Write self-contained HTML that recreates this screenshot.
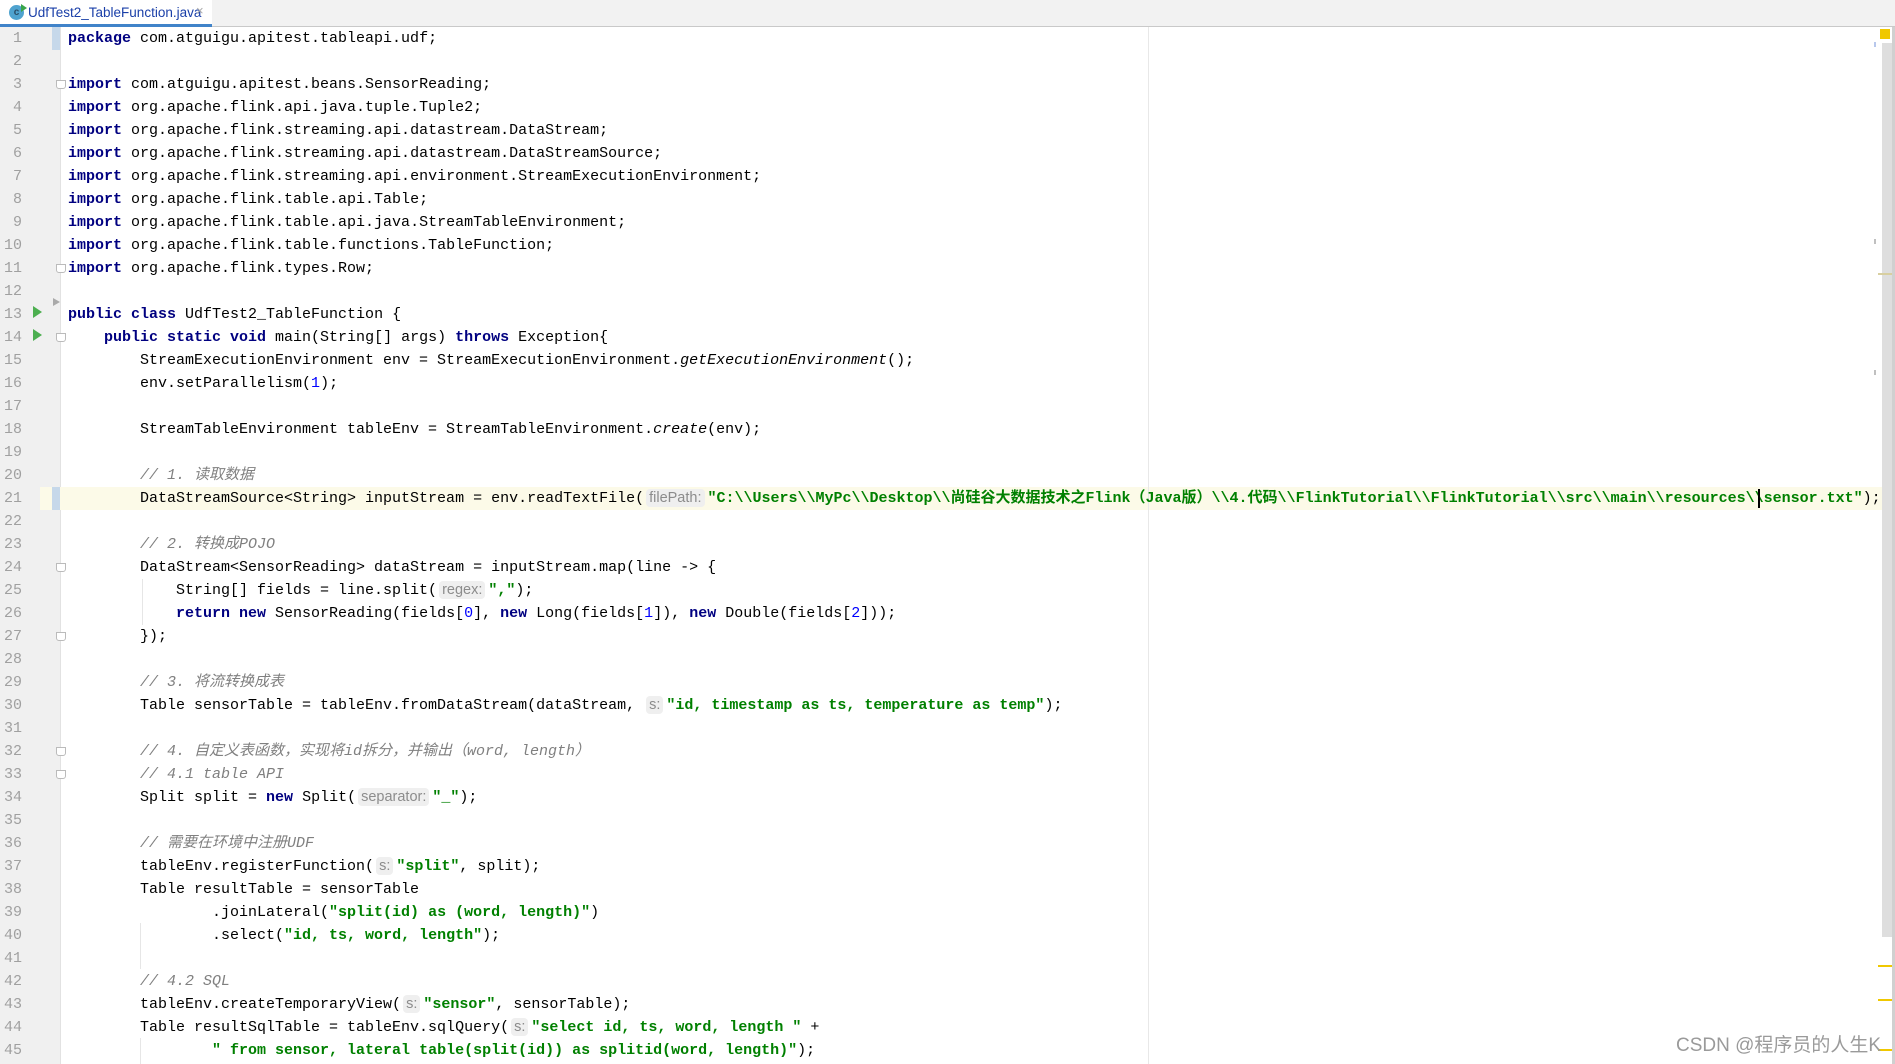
<!DOCTYPE html>
<html><head><meta charset="utf-8"><style>
html,body{margin:0;padding:0;width:1895px;height:1064px;overflow:hidden;background:#fff;}
#tabbar{position:absolute;left:0;top:0;width:1895px;height:26px;background:#f2f2f2;border-bottom:1px solid #c9c9c9;}
#tab{position:absolute;left:0;top:0;width:212px;height:24px;border-bottom:3px solid #4083c9;background:#fff;font:13.5px "Liberation Sans",sans-serif;color:#1a3fa8;}
#tab .ic{position:absolute;left:9px;top:5px;width:15px;height:15px;border-radius:50%;background:#4fa3cf;color:#2a4d66;font:bold 10px "Liberation Sans",sans-serif;text-align:center;line-height:15px;}
#tab .ic:after{content:"";position:absolute;right:-3px;top:-1px;border-left:6px solid #3aa54a;border-top:4px solid transparent;border-bottom:4px solid transparent;}
#tab .t{position:absolute;left:28px;top:5px;}
#tab .x{position:absolute;left:196px;top:3px;color:#aaa;font-size:13px;}
#gutter{position:absolute;left:0;top:27px;width:60px;height:1037px;background:#f0f0f0;border-right:1px solid #e2e2e2;}
#nums{position:absolute;left:0;top:27px;width:22px;text-align:right;font:15px/23px "Liberation Mono",monospace;color:#a0a0a0;}
#code{position:absolute;left:68px;top:27px;font:15px/23px "Liberation Mono","Noto Sans CJK SC",monospace;color:#000;white-space:pre;}
.k{color:#000080;font-weight:bold}
.s{color:#008000;font-weight:bold}
.n{color:#0000ff}
.c{color:#808080;font-style:italic}
.i{font-style:italic}
.h{font:14.5px "Liberation Sans","Noto Sans CJK SC",sans-serif;color:#8c8c8c;background:#efefef;border-radius:4px;padding:1px 3px;margin:0 3px 0 2px;}
#cur{position:absolute;left:40px;top:487px;width:1842px;height:23px;background:#fcfae8;}
#curmark{position:absolute;left:52px;top:487px;width:8px;height:23px;background:#c6d8ea;}
#l1mark{position:absolute;left:52px;top:27px;width:8px;height:23px;background:#c6d8ea;}
#margin{position:absolute;left:1148px;top:27px;width:1px;height:1037px;background:#e8e8e8;}
.guide{position:absolute;width:1px;background:#e6e6e6;}
.run{position:absolute;left:33px;width:0;height:0;border-left:9px solid #4caf50;border-top:6px solid transparent;border-bottom:6px solid transparent;}
.fold{position:absolute;left:56px;width:8px;height:7px;border:1px solid #bbb;background:#fff;border-radius:0 0 3px 3px;}
#sb{position:absolute;left:1882px;top:43px;width:10px;height:894px;background:#dedede;}
#sbedge{position:absolute;left:1892px;top:27px;width:3px;height:1037px;background:#d0d0d0;}
#caret{position:absolute;left:1758px;top:489px;width:2px;height:19px;background:#000;}
#wm{position:absolute;left:1676px;top:1030px;font:19px "Liberation Sans","Noto Sans CJK SC",sans-serif;color:#9a9a9a;}
</style></head><body>
<div id="tabbar"><div id="tab"><div class="ic">c</div><span class="t">UdfTest2_TableFunction.java</span><span class="x">×</span></div></div>
<div id="gutter"></div>
<div id="cur"></div><div id="curmark"></div><div id="l1mark"></div>
<div id="margin"></div>
<div class="guide" style="left:142px;top:579px;height:46px"></div>
<div class="guide" style="left:140px;top:923px;height:46px"></div>
<div class="guide" style="left:140px;top:1038px;height:26px"></div>
<div class="run" style="top:306px"></div><div class="run" style="top:329px"></div>
<div style="position:absolute;left:53px;top:298px;border-left:7px solid #aaa;border-top:4px solid transparent;border-bottom:4px solid transparent"></div>
<div class="fold" style="top:80px"></div><div class="fold" style="top:264px"></div><div class="fold" style="top:333px"></div>
<div class="fold" style="top:563px"></div><div class="fold" style="top:632px"></div><div class="fold" style="top:747px"></div><div class="fold" style="top:770px"></div>
<div id="nums">1<br>2<br>3<br>4<br>5<br>6<br>7<br>8<br>9<br>10<br>11<br>12<br>13<br>14<br>15<br>16<br>17<br>18<br>19<br>20<br>21<br>22<br>23<br>24<br>25<br>26<br>27<br>28<br>29<br>30<br>31<br>32<br>33<br>34<br>35<br>36<br>37<br>38<br>39<br>40<br>41<br>42<br>43<br>44<br>45</div>
<div id="code"><span class="k">package</span> com.atguigu.apitest.tableapi.udf;

<span class="k">import</span> com.atguigu.apitest.beans.SensorReading;
<span class="k">import</span> org.apache.flink.api.java.tuple.Tuple2;
<span class="k">import</span> org.apache.flink.streaming.api.datastream.DataStream;
<span class="k">import</span> org.apache.flink.streaming.api.datastream.DataStreamSource;
<span class="k">import</span> org.apache.flink.streaming.api.environment.StreamExecutionEnvironment;
<span class="k">import</span> org.apache.flink.table.api.Table;
<span class="k">import</span> org.apache.flink.table.api.java.StreamTableEnvironment;
<span class="k">import</span> org.apache.flink.table.functions.TableFunction;
<span class="k">import</span> org.apache.flink.types.Row;

<span class="k">public class</span> UdfTest2_TableFunction {
    <span class="k">public static void</span> main(String[] args) <span class="k">throws</span> Exception{
        StreamExecutionEnvironment env = StreamExecutionEnvironment.<span class="i">getExecutionEnvironment</span>();
        env.setParallelism(<span class="n">1</span>);

        StreamTableEnvironment tableEnv = StreamTableEnvironment.<span class="i">create</span>(env);

        <span class="c">// 1. 读取数据</span>
        DataStreamSource&lt;String&gt; inputStream = env.readTextFile(<span class="h">filePath:</span><span class="s">"C:\\Users\\MyPc\\Desktop\\尚硅谷大数据技术之Flink（Java版）\\4.代码\\FlinkTutorial\\FlinkTutorial\\src\\main\\resources\\sensor.txt"</span>);

        <span class="c">// 2. 转换成POJO</span>
        DataStream&lt;SensorReading&gt; dataStream = inputStream.map(line -&gt; {
            String[] fields = line.split(<span class="h">regex:</span><span class="s">","</span>);
            <span class="k">return new</span> SensorReading(fields[<span class="n">0</span>], <span class="k">new</span> Long(fields[<span class="n">1</span>]), <span class="k">new</span> Double(fields[<span class="n">2</span>]));
        });

        <span class="c">// 3. 将流转换成表</span>
        Table sensorTable = tableEnv.fromDataStream(dataStream, <span class="h">s:</span><span class="s">"id, timestamp as ts, temperature as temp"</span>);

        <span class="c">// 4. 自定义表函数，实现将id拆分，并输出（word, length）</span>
        <span class="c">// 4.1 table API</span>
        Split split = <span class="k">new</span> Split(<span class="h">separator:</span><span class="s">"_"</span>);

        <span class="c">// 需要在环境中注册UDF</span>
        tableEnv.registerFunction(<span class="h">s:</span><span class="s">"split"</span>, split);
        Table resultTable = sensorTable
                .joinLateral(<span class="s">"split(id) as (word, length)"</span>)
                .select(<span class="s">"id, ts, word, length"</span>);

        <span class="c">// 4.2 SQL</span>
        tableEnv.createTemporaryView(<span class="h">s:</span><span class="s">"sensor"</span>, sensorTable);
        Table resultSqlTable = tableEnv.sqlQuery(<span class="h">s:</span><span class="s">"select id, ts, word, length "</span> +
                <span class="s">" from sensor, lateral table(split(id)) as splitid(word, length)"</span>);</div>
<div id="caret"></div>
<div id="sb"></div><div id="sbedge"></div>
<div style="position:absolute;left:1880px;top:29px;width:10px;height:10px;background:#f0c800"></div>
<div style="position:absolute;left:1874px;top:42px;width:2px;height:5px;background:#b8c8ec"></div>
<div style="position:absolute;left:1874px;top:239px;width:2px;height:5px;background:#c0c0c0"></div>
<div style="position:absolute;left:1878px;top:273px;width:14px;height:2px;background:#d8cfa0"></div>
<div style="position:absolute;left:1874px;top:370px;width:2px;height:5px;background:#c0c0c0"></div>
<div style="position:absolute;left:1878px;top:965px;width:14px;height:2px;background:#f0c800"></div>
<div style="position:absolute;left:1878px;top:999px;width:14px;height:2px;background:#f0c800"></div>
<div style="position:absolute;left:1878px;top:1049px;width:14px;height:2px;background:#f0c800"></div>
<div id="wm">CSDN @程序员的人生K</div>
</body></html>
